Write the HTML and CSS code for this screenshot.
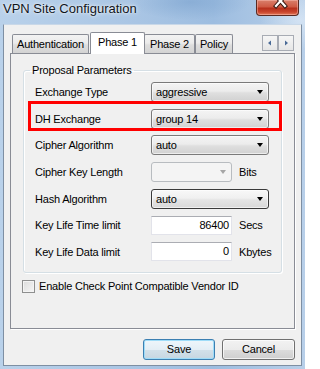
FILE: index.html
```html
<!DOCTYPE html>
<html>
<head>
<meta charset="utf-8">
<link rel="stylesheet" href="styles.css">
</head>
<body>
<div class="window">
  <div class="titlebar">
    <span class="title">VPN Site Configuration</span>
    <div class="close">
      <svg width="43" height="16" viewBox="0 0 43 16">
        <path d="M20 -3 L29 7 M29 -3 L20 7" stroke="#3a1a14" stroke-width="4.2" stroke-linecap="square" fill="none"/>
        <path d="M20 -3 L29 7 M29 -3 L20 7" stroke="#ffffff" stroke-width="2.2" stroke-linecap="square" fill="none"/>
      </svg>
    </div>
  </div>
  <div class="client">
    <div class="tabstrip">
      <div class="tab t-auth">Authentication</div>
      <div class="tab active t-p1">Phase 1</div>
      <div class="tab t-p2">Phase 2</div>
      <div class="tab t-pol">Policy</div>
      <div class="scroll">
        <div class="sbtn"><svg width="14" height="14" viewBox="0 0 14 14"><path d="M5 7 L8 4.5 L8 9.5 Z" fill="#4a6a96"/></svg></div>
        <div class="sbtn"><svg width="14" height="14" viewBox="0 0 14 14"><path d="M9 7 L6 4.5 L6 9.5 Z" fill="#4a6a96"/></svg></div>
      </div>
    </div>
    <div class="panel">
      <fieldset class="group">
        <legend>Proposal Parameters</legend>
        <div class="rows">
          <div class="row"><span class="lbl">Exchange Type</span><div class="combo"><span>aggressive</span><i class="arrow"></i></div></div>
          <div class="row"><span class="lbl">DH Exchange</span><div class="combo"><span>group 14</span><i class="arrow"></i></div></div>
          <div class="row"><span class="lbl">Cipher Algorithm</span><div class="combo"><span>auto</span><i class="arrow"></i></div></div>
          <div class="row"><span class="lbl">Cipher Key Length</span><div class="combo small disabled"><span></span><i class="arrow"></i></div><span class="unit">Bits</span></div>
          <div class="row"><span class="lbl">Hash Algorithm</span><div class="combo focus"><span>auto</span><i class="arrow"></i></div></div>
          <div class="row"><span class="lbl">Key Life Time limit</span><div class="input">86400</div><span class="unit">Secs</span></div>
          <div class="row"><span class="lbl">Key Life Data limit</span><div class="input">0</div><span class="unit">Kbytes</span></div>
        </div>
      </fieldset>
      <div class="check"><span class="box"></span><span>Enable Check Point Compatible Vendor ID</span></div>
    </div>
    <div class="buttons">
      <div class="btn default">Save</div>
      <div class="btn">Cancel</div>
    </div>
  </div>
  <div class="highlight"></div>
</div>
</body>
</html>
```
FILE: styles.css
```css
* { box-sizing: border-box; }
html, body { margin: 0; padding: 0; }
body {
  font-family: "Liberation Sans", Arial, sans-serif;
  font-size: 11px;
  letter-spacing: -0.2px;
  color: #000;
  width: 305px;
  height: 369px;
  overflow: hidden;
}
.window {
  position: relative;
  width: 305px;
  height: 369px;
  display: flex;
  flex-direction: column;
  background:
    radial-gradient(ellipse 60px 18px at 190px 2px, rgba(120,160,205,0.55), rgba(120,160,205,0) 100%),
    radial-gradient(ellipse 40px 30px at 300px 20px, rgba(230,240,250,0.6), rgba(230,240,250,0) 100%),
    linear-gradient(90deg, #b9d1ea 0%, #a9c5e4 45%, #9dbde0 70%, #b8cfe9 100%);
}
.titlebar {
  height: 24px;
  display: flex;
  align-items: flex-start;
  flex: none;
}
.title {
  font-size: 13px;
  letter-spacing: 0;
  line-height: 16px;
  padding: 1px 0 0 3px;
  color: #10151c;
  text-shadow: 0 0 5px rgba(255,255,255,0.9), 0 0 2px rgba(255,255,255,0.8);
}
.close {
  margin-left: auto;
  margin-right: 6px;
  width: 43px;
  height: 16px;
  border: 1px solid #5a2a22;
  border-top: none;
  border-radius: 0 0 4px 4px;
  background: linear-gradient(180deg, #d9806c 0%, #cf5a44 45%, #b7301c 55%, #c9452d 80%, #e27a5a 100%);
  box-shadow: inset 0 0 0 1px rgba(255,200,190,0.45);
  overflow: hidden;
}
.close svg { display: block; margin: -1px 0 0 -1px; }
.client {
  flex: none;
  height: 342px;
  margin: 0 3px;
  border: 1px solid #7e8fa3;
  border-top-color: #c9d8e8;
  background: #f0f0f0;
  display: flex;
  flex-direction: column;
}
.tabstrip {
  margin: 7px 6px 0 6px;
  height: 21px;
  display: flex;
  align-items: flex-end;
  padding-left: 2px;
  position: relative;
  z-index: 2;
}
.tab {
  height: 19px;
  border: 1px solid #898c95;
  border-bottom: none;
  border-radius: 2px 2px 0 0;
  background: linear-gradient(180deg, #f3f3f3 0%, #ebebeb 45%, #dedede 55%, #d3d3d3 100%);
  text-align: center;
  line-height: 18px;
  white-space: nowrap;
}
.tab.active {
  height: 22px;
  margin-bottom: -1px;
  background: #ffffff;
  line-height: 19px;
}
.t-auth { width: 77px; }
.t-p1 { width: 55px; margin-left: 1px; }
.t-p2 { width: 51px; margin-left: -1px; }
.t-pol { width: 38px; margin-left: 0; }
.scroll {
  margin-left: auto;
  margin-right: 1px;
  align-self: flex-start;
  margin-top: 3px;
  display: flex;
}
.sbtn {
  width: 16px;
  height: 16px;
  border: 1px solid #a8acb4;
  background: linear-gradient(180deg, #f6f6f6 0%, #e6e6e6 100%);
}
.sbtn svg { display: block; }
.panel {
  margin: 0 6px;
  height: 276px;
  border: 1px solid #898c95;
  box-shadow: 1px 1px 0 #ffffff;
  background: #f0f0f0;
  display: flex;
  flex-direction: column;
  position: relative;
  z-index: 1;
}
.group {
  margin: 10px 0 0 12px;
  width: 259px;
  padding: 5px 0 10px 0;
  border: 1px solid #d5dfe5;
  border-radius: 3px;
  box-shadow: inset 1px 1px 0 #ffffff, 1px 1px 0 #ffffff;
  min-width: 0;
}
.group legend {
  margin-left: 6px;
  padding: 0 2px;
  line-height: 13px;
  font-size: 11px;
}
.rows {
  display: flex;
  flex-direction: column;
  gap: 6.67px;
  padding-left: 11px;
}
.row {
  height: 20px;
  display: flex;
  align-items: center;
}
.lbl { width: 116px; flex: none; }
.combo {
  width: 118px;
  height: 20px;
  border: 1px solid #7a7a7a;
  border-radius: 3px;
  background: linear-gradient(180deg, #f4f4f4 0%, #ececec 45%, #dfdfdf 55%, #d1d1d1 100%);
  box-shadow: inset 0 0 0 1px rgba(255,255,255,0.6);
  display: flex;
  align-items: center;
  padding: 0 5px 0 4px;
  position: relative;
}
.combo span { flex: 1; }
.arrow {
  width: 0;
  height: 0;
  border-left: 3.5px solid transparent;
  border-right: 3.5px solid transparent;
  border-top: 4px solid #000;
}
.combo.small { width: 81px; }
.combo.disabled {
  border-color: #b8bcc0;
  background: #f4f4f4;
  box-shadow: none;
}
.combo.disabled .arrow { border-top-color: #a6a6a6; }
.combo.focus {
  border-color: #3a3a3a;
  background: linear-gradient(180deg, #f8f8f8 0%, #f0f0f0 45%, #e4e4e4 55%, #d8d8d8 100%);
}
.input {
  width: 81px;
  height: 19px;
  border: 1px solid #e2e3ea;
  border-top-color: #abadb3;
  background: #ffffff;
  text-align: right;
  padding-right: 2px;
  line-height: 17px;
}
.unit { margin-left: 7px; }
.check {
  margin: 7px 0 0 11px;
  display: flex;
  align-items: center;
  gap: 4px;
  height: 13px;
}
.box {
  width: 13px;
  height: 13px;
  flex: none;
  border: 1px solid #8e8f8f;
  background: linear-gradient(135deg, #dcdcdc 0%, #f6f6f6 100%);
  box-shadow: inset 0 0 0 1px #f4f4f4;
}
.buttons {
  margin-top: 10px;
  padding-right: 6px;
  display: flex;
  justify-content: flex-end;
  gap: 7px;
}
.btn {
  height: 21px;
  border: 1px solid #707070;
  border-radius: 3px;
  background: linear-gradient(180deg, #f2f2f2 0%, #ebebeb 50%, #dddddd 50%, #cfcfcf 100%);
  box-shadow: inset 0 0 0 1px rgba(255,255,255,0.7);
  text-align: center;
  line-height: 19px;
  width: 73px;
}
.btn.default {
  width: 72px;
  border-color: #3c7fb1;
  box-shadow: inset 0 0 0 1px #9fdcf8;
  background: linear-gradient(180deg, #eef6fb 0%, #e4eef5 50%, #d3e1ea 50%, #c6d6e1 100%);
}
.highlight {
  position: absolute;
  left: 28px;
  top: 101px;
  width: 254px;
  height: 30px;
  border: 3px solid #ff0000;
  z-index: 5;
}
```
